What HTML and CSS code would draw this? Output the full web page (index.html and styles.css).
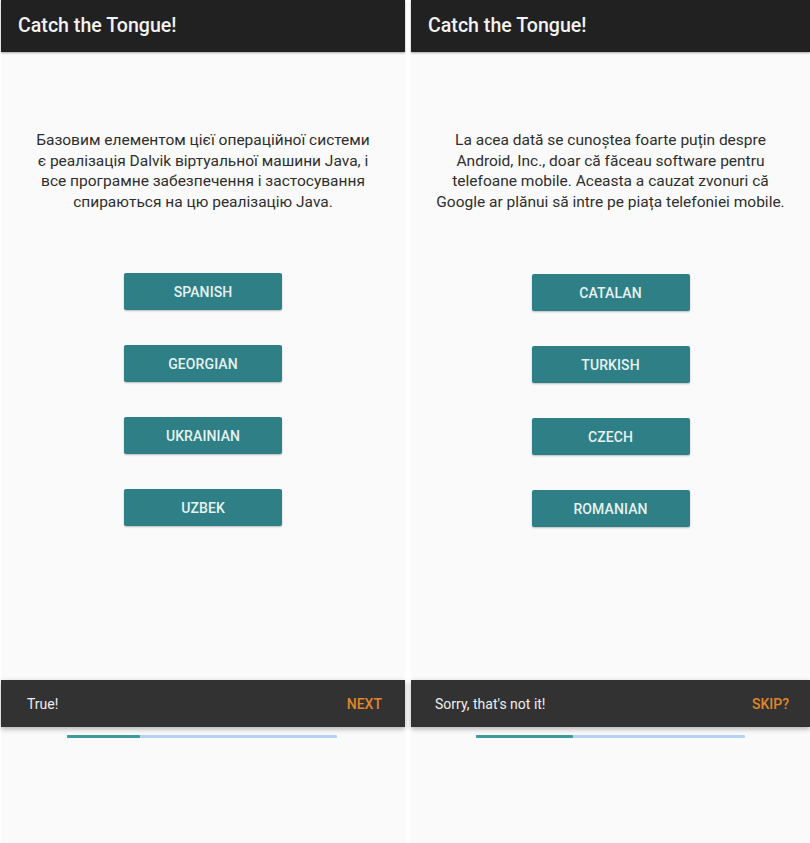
FILE: index.html
```html
<!DOCTYPE html>
<html lang="en">
<head>
<meta charset="utf-8">
<title>Catch the Tongue!</title>
<link rel="stylesheet" href="styles.css">
</head>
<body>
<div class="screens">
  <section class="phone phone-left">
    <header class="appbar"><h1 class="title">Catch the Tongue!</h1></header>
    <main class="content">
      <p class="question">Базовим елементом цієї операційної системи<br>є реалізація Dalvik віртуальної машини Java, і<br>все програмне забезпечення і застосування<br>спираються на цю реалізацію Java.</p>
      <div class="answers">
        <button class="answer">SPANISH</button>
        <button class="answer">GEORGIAN</button>
        <button class="answer">UKRAINIAN</button>
        <button class="answer">UZBEK</button>
      </div>
    </main>
    <div class="snackbar"><span class="snack-text">True!</span><span class="snack-action">NEXT</span></div>
    <div class="bottom">
      <div class="progress"><div class="progress-fill" style="width:27%"></div></div>
    </div>
  </section>
  <section class="phone phone-right">
    <header class="appbar"><h1 class="title">Catch the Tongue!</h1></header>
    <main class="content">
      <p class="question">La acea dată se cunoștea foarte puțin despre<br>Android, Inc., doar că făceau software pentru<br>telefoane mobile. Aceasta a cauzat zvonuri că<br>Google ar plănui să intre pe piața telefoniei mobile.</p>
      <div class="answers">
        <button class="answer">CATALAN</button>
        <button class="answer">TURKISH</button>
        <button class="answer">CZECH</button>
        <button class="answer">ROMANIAN</button>
      </div>
    </main>
    <div class="snackbar"><span class="snack-text">Sorry, that's not it!</span><span class="snack-action">SKIP?</span></div>
    <div class="bottom">
      <div class="progress"><div class="progress-fill" style="width:36%"></div></div>
    </div>
  </section>
</div>
</body>
</html>
```

FILE: styles.css
```css
* { box-sizing: border-box; }
html, body { margin: 0; padding: 0; background: #ffffff; }
body { font-family: Roboto, "Noto Sans", "Liberation Sans", sans-serif; }

.screens {
  display: flex;
  gap: 6px;
  padding-left: 1px;
  height: 843px;
}

.phone {
  background: #fafafa;
  display: flex;
  flex-direction: column;
  height: 843px;
}
.phone-left { width: 404px; }
.phone-right { width: 399px; }

.appbar {
  height: 52px;
  flex: none;
  background: #212121;
  display: flex;
  align-items: center;
  box-shadow: 0 1px 2px rgba(0,0,0,0.35);
  position: relative;
  z-index: 1;
}
.title {
  margin: 0;
  padding-left: 17px;
  padding-bottom: 2px;
  color: #f2f2f2;
  font-size: 19.6px;
  font-weight: 500;
  letter-spacing: 0;
}

.content {
  flex: 1;
  display: flex;
  flex-direction: column;
  align-items: center;
  padding-top: 78px;
}
.question {
  margin: 0;
  text-align: center;
  color: #2e2e2e;
  font-size: 15.5px;
  line-height: 20.5px;
  white-space: nowrap;
}
.answers {
  margin-top: 61px;
  display: flex;
  flex-direction: column;
  gap: 35px;
  align-items: center;
}
.answer {
  width: 158px;
  height: 37px;
  border: 0;
  border-radius: 2px;
  background: #2f7f86;
  color: #e6f2f2;
  font-family: Roboto, "Noto Sans", sans-serif;
  font-size: 14px;
  font-weight: 500;
  letter-spacing: 0.1px;
  box-shadow: 0 1px 2px rgba(0,0,0,0.25);
}
.phone-right .answers { margin-top: 62px; }

.snackbar {
  height: 47px;
  flex: none;
  background: #323232;
  display: flex;
  align-items: center;
  justify-content: space-between;
  padding: 0 23px 0 26px;
  box-shadow: 0 2px 5px rgba(0,0,0,0.3);
}
.phone-right .snackbar { padding-left: 24px; padding-right: 21px; }
.snack-text {
  color: #eeeeee;
  font-size: 14px;
}
.snack-action {
  color: #e0862b;
  font-size: 14px;
  font-weight: 500;
}

.bottom {
  height: 116px;
  flex: none;
  padding-top: 8px;
  display: flex;
  justify-content: center;
}
.progress {
  width: 270px;
  height: 3px;
  background: #b3d3f2;
  border-radius: 1px;
  position: relative;
  z-index: 2;
}
.phone-left .progress { margin-left: -2px; }
.phone-right .progress { width: 269px; margin-left: 0; }
.progress-fill {
  height: 100%;
  background: #3a9c9c;
  border-radius: 1px;
}
```
